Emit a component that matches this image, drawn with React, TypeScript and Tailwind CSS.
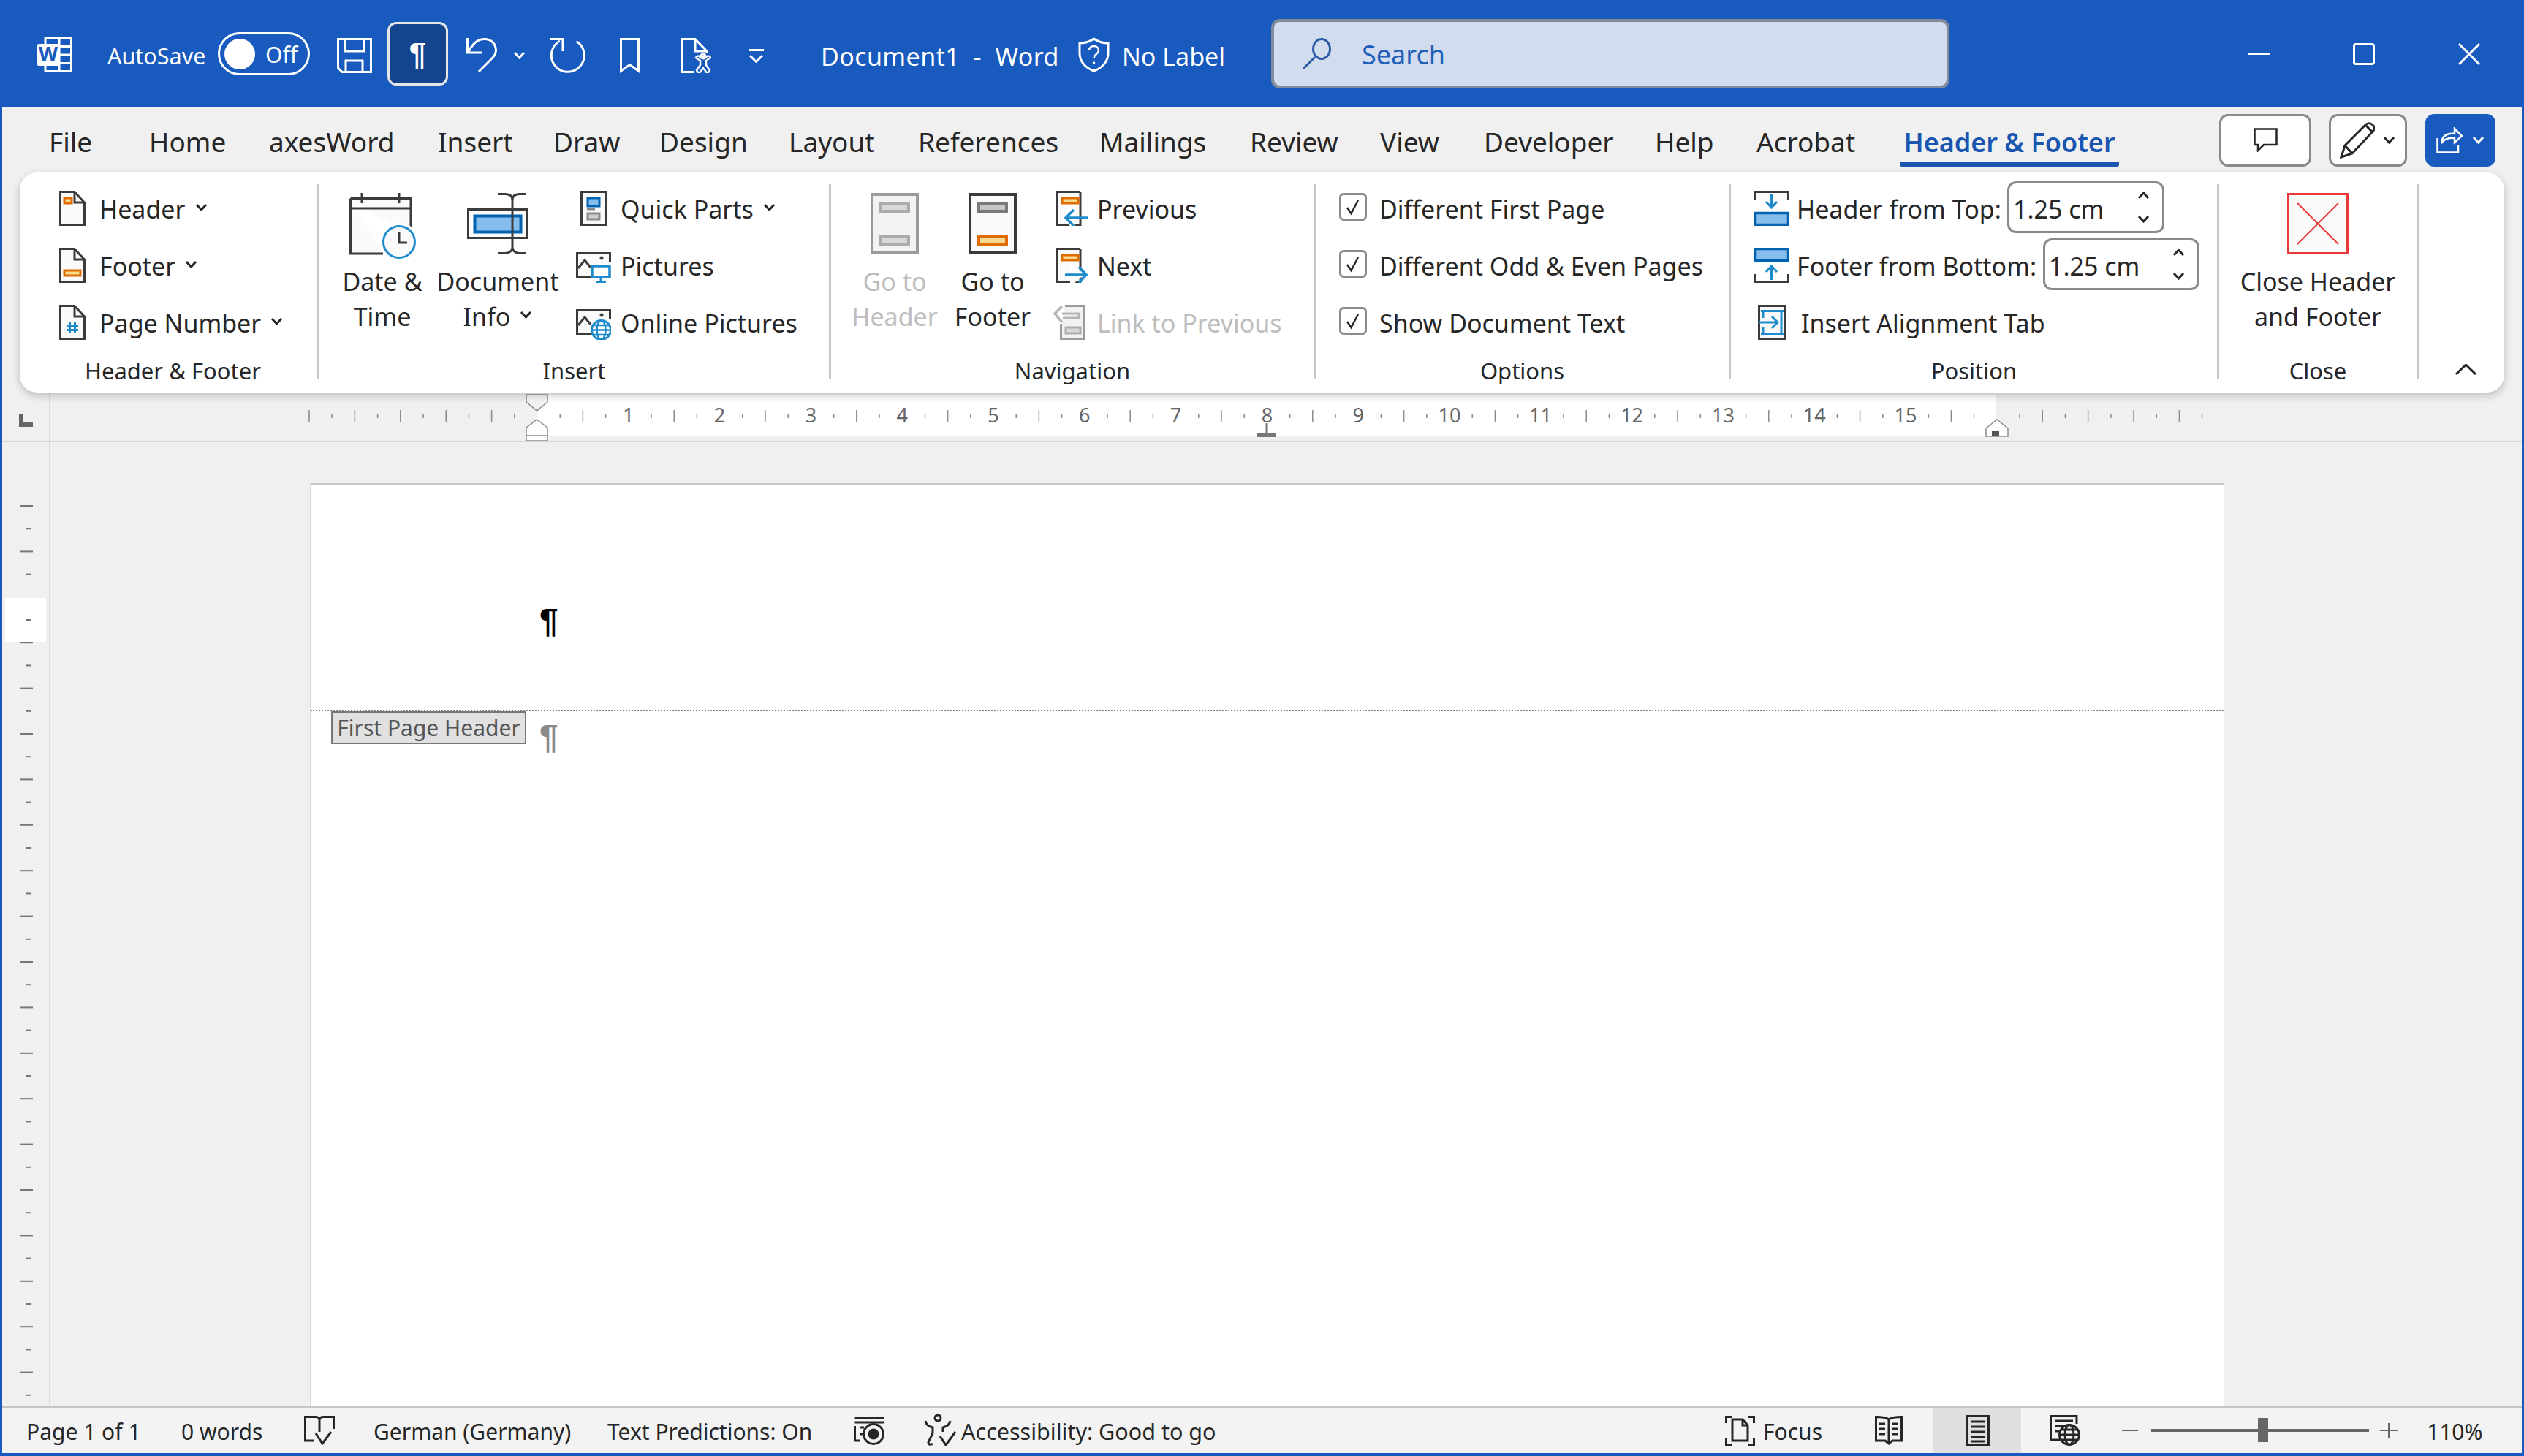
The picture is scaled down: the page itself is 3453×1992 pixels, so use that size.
import type { ReactNode } from "react"

const DARK = "#3b3b3b"
const BLUE = "#1e8bcd"
const ORANGE = "#e06c00"
const PALE = "#f8d98e"
const GREY = "#9b9b9b"

function Chevron({ up = false, color = "#262626", className = "" }: { up?: boolean; color?: string; className?: string }) {
  return (
    <svg className={`w-[17px] h-[10px] shrink-0 ${className}`} viewBox="0 0 17 10" fill="none" stroke={color} strokeWidth={3}>
      <path d={up ? "M2 9L8.5 2L15 9" : "M2 1L8.5 8L15 1"} />
    </svg>
  )
}

function PageIcon({ children }: { children?: ReactNode }) {
  return (
    <svg className="w-[36px] h-[48px]" viewBox="0 0 36 48" fill="#fafafa" stroke={DARK} strokeWidth={3}>
      <path d="M1.5 1.5H21L34.5 16V46.5H1.5Z" />
      <path d="M21 1.5V16H34.5" fill="none" />
      {children}
    </svg>
  )
}

function HeaderIcon() {
  return (
    <PageIcon>
      <rect x="7" y="10" width="10" height="7" fill={PALE} stroke={ORANGE} strokeWidth={3} />
    </PageIcon>
  )
}

function FooterIcon() {
  return (
    <PageIcon>
      <rect x="7" y="31" width="22" height="7" fill={PALE} stroke={ORANGE} strokeWidth={3} />
    </PageIcon>
  )
}

function NumberIcon() {
  return (
    <PageIcon>
      <path d="M14.5 24V39M21.5 24V39M10 28.5H26M10 34.5H26" fill="none" stroke={BLUE} strokeWidth={3} />
    </PageIcon>
  )
}

function DateIcon() {
  return (
    <svg className="w-[91px] h-[90px]" viewBox="0 0 91 90" fill="#fafafa" stroke={DARK} strokeWidth={3}>
      <path d="M1.5 7.5H84V60M46 83H1.5V7.5" />
      <path d="M1.5 21H84M17 0V14M68 0V14" fill="none" />
      <circle cx="68" cy="67" r="25" fill="#fff" stroke="#fff" />
      <circle cx="68" cy="67" r="21.5" fill="#fafafa" stroke={BLUE} />
      <path d="M68 53V68H79" fill="none" />
    </svg>
  )
}

function DocInfoIcon() {
  return (
    <svg className="w-[84px] h-[84px]" viewBox="0 0 84 84" fill="none" stroke={DARK} strokeWidth={3}>
      <rect x="1.5" y="22.5" width="81" height="39" fill="#fafafa" />
      <rect x="10.5" y="31.5" width="63" height="22" fill="#85bdec" stroke="#0063b1" strokeWidth={4} />
      <path d="M42 1.5H52C58 1.5 62 4 62 10V74C62 79 58 82.5 52 82.5H42M81 1.5H72C66 1.5 62 4 62 10M62 74C62 79 66 82.5 72 82.5H81" />
    </svg>
  )
}

function QuickPartsIcon() {
  return (
    <svg className="w-[36px] h-[48px]" viewBox="0 0 36 48" fill="#fafafa" stroke={DARK} strokeWidth={3}>
      <rect x="1.5" y="1.5" width="33" height="45" />
      <rect x="10" y="10" width="16" height="11" fill="#85bdec" stroke="#0063b1" />
      <path d="M9 25H20" stroke="#8a8a8a" fill="none" />
      <rect x="10" y="31" width="16" height="8" fill="#d0d0d0" stroke="#8a8a8a" />
    </svg>
  )
}

function PicFrame({ children }: { children: ReactNode }) {
  return (
    <svg className="w-[48px] h-[48px]" viewBox="0 0 48 48" fill="none" stroke={DARK} strokeWidth={3}>
      <path d="M24 39.5H1.5V7.5H46.5V20" fill="#fafafa" />
      <path d="M3 28L12 17L20 27" />
      <circle cx="35" cy="14" r="2.5" fill={DARK} stroke="none" />
      {children}
    </svg>
  )
}

function PicturesIcon() {
  return (
    <PicFrame>
      <rect x="22" y="25" width="24" height="15" fill="#fff" stroke={BLUE} strokeWidth={3.5} />
      <path d="M34 40V46M27 46.5H41" stroke={BLUE} strokeWidth={3} />
    </PicFrame>
  )
}

function OnlinePicturesIcon() {
  return (
    <PicFrame>
      <circle cx="34.5" cy="34.5" r="13" fill="#fff" stroke={BLUE} strokeWidth={3} />
      <ellipse cx="34.5" cy="34.5" rx="6" ry="13" stroke={BLUE} strokeWidth={2.5} />
      <path d="M21 34.5H48M23 28H46M23 41H46" stroke={BLUE} strokeWidth={2.5} />
    </PicFrame>
  )
}

function GoToIcon({ footer = false }: { footer?: boolean }) {
  const edge = footer ? DARK : GREY
  return (
    <svg className="w-[66px] h-[84px]" viewBox="0 0 66 84" strokeWidth={4}>
      <rect x="2" y="2" width="62" height="80" fill={footer ? "#fafafa" : "#f2f2f2"} stroke={edge} />
      <rect x="14" y="14" width="38" height="11" fill={footer ? "#c8c6c4" : "#d8d8d8"} stroke={footer ? "#7a7a7a" : "#acacac"} />
      <rect
        x="14"
        y="59"
        width="38"
        height="11"
        fill={footer ? PALE : "#d8d8d8"}
        stroke={footer ? ORANGE : "#acacac"}
      />
    </svg>
  )
}

function PrevNextIcon({ next = false }: { next?: boolean }) {
  return (
    <svg className="w-[48px] h-[48px]" viewBox="0 0 48 48" fill="none">
      <path d="M38 1.5H6.5V46.5H38V1.5" fill="#fafafa" stroke={DARK} strokeWidth={3} />
      <rect x="13" y="10" width="22" height="7" fill={PALE} stroke={ORANGE} strokeWidth={3} />
      {next ? (
        <g>
          <path d="M24 21L44 36L30 48H24Z" fill="#fff" />
          <path d="M17 37H46M36 26L46 37L36 48" stroke={BLUE} strokeWidth={3.5} />
        </g>
      ) : (
        <g>
          <path d="M24 21L11 36L24 48H30V21Z" fill="#fff" />
          <path d="M48 37H19M29 26L18 37L29 48" stroke={BLUE} strokeWidth={3.5} />
        </g>
      )}
    </svg>
  )
}

function LinkIcon() {
  return (
    <svg className="w-[48px] h-[48px]" viewBox="0 0 48 48" fill="none" stroke={GREY} strokeWidth={3}>
      <path d="M17 1.5H43.5V46.5H11.5V26" fill="#f2f2f2" />
      <path d="M3 12H36V18H14" strokeWidth={3} stroke="#b5b5b5" />
      <path d="M13 2L3 12L13 24" strokeWidth={3.5} stroke="#b5b5b5" fill="#fff" />
      <rect x="18" y="31" width="20" height="8" fill="#d8d8d8" stroke="#acacac" />
    </svg>
  )
}

function CheckBox() {
  return (
    <span className="w-[38px] h-[38px] mb-[5px] shrink-0 flex items-center justify-center rounded-[6px] border-[3px] border-[#8a8a8a] bg-white">
      <svg className="w-[22px] h-[24px]" viewBox="0 0 22 24" fill="none" stroke="#262626" strokeWidth={2.5}>
        <path d="M3 13L8.5 21L18 3" />
      </svg>
    </span>
  )
}

function FromTopIcon() {
  return (
    <svg className="w-[48px] h-[48px]" viewBox="0 0 48 48" fill="none" strokeWidth={3}>
      <path d="M1.5 12V1.5H46.5V12" stroke={DARK} fill="#fafafa" />
      <path d="M23.5 5V22M16 15L23.5 23L31 15" stroke={BLUE} />
      <rect x="1.5" y="30.5" width="45" height="16" fill="#85bdec" stroke="#0063b1" strokeWidth={3.5} />
    </svg>
  )
}

function FromBottomIcon() {
  return (
    <svg className="w-[48px] h-[48px]" viewBox="0 0 48 48" fill="none" strokeWidth={3}>
      <path d="M1.5 36V46.5H46.5V36" stroke={DARK} />
      <path d="M23.5 44V25M16 33L23.5 25L31 33" stroke={BLUE} />
      <rect x="1.5" y="1.5" width="45" height="16" fill="#85bdec" stroke="#0063b1" strokeWidth={3.5} />
    </svg>
  )
}

function AlignTabIcon() {
  return (
    <svg className="w-[48px] h-[48px]" viewBox="0 0 48 48" fill="none" strokeWidth={3}>
      <rect x="6.5" y="1.5" width="36" height="45" stroke={DARK} fill="#fafafa" />
      <path d="M9 8.5H40M9 40.5H40M12 8V18M12 30V40M37 8V40" stroke={BLUE} />
      <path d="M7 24H31M24 16L32 24L24 32" stroke={BLUE} />
    </svg>
  )
}

function CloseIcon() {
  return (
    <svg className="w-[84px] h-[84px]" viewBox="0 0 84 84" fill="#fafafa">
      <rect x="1.5" y="1.5" width="81" height="81" stroke="#e83a3a" strokeWidth={3} />
      <path d="M14 14L70 70M70 14L14 70" stroke="#e83a3a" strokeWidth={2} fill="none" />
    </svg>
  )
}

function SmallBtn({ icon, label, chevron, muted }: { icon: ReactNode; label: string; chevron?: boolean; muted?: boolean }) {
  return (
    <div className={`flex items-center h-[48px] whitespace-nowrap ${muted ? "text-[#bdbdbd]" : ""}`}>
      <span className="w-[48px] h-[48px] flex items-center justify-center shrink-0">{icon}</span>
      <span className="ml-[13px] pt-[3px]">{label}</span>
      {chevron && <Chevron className="ml-[13px] mb-[2px]" />}
    </div>
  )
}

function LargeBtn({ icon, lines, chevron, muted, className }: { icon: ReactNode; lines: string[]; chevron?: boolean; muted?: boolean; className: string }) {
  return (
    <div className={`flex flex-col items-center pt-[12px] whitespace-nowrap ${muted ? "text-[#bdbdbd]" : ""} ${className}`}>
      <span className="h-[84px] flex items-start justify-center">{icon}</span>
      <span className="mt-[13px] leading-[48px]">{lines[0]}</span>
      <span className="leading-[48px] flex items-center">
        {lines[1]}
        {chevron && <Chevron className="ml-[13px] mb-[4px]" />}
      </span>
    </div>
  )
}

function Group({ label, className, labelClass = "", children }: { label: string; className: string; labelClass?: string; children: ReactNode }) {
  return (
    <div className={`h-[266px] flex flex-col border-r-[3px] border-[#c8c8c8] shrink-0 ${className}`}>
      <div className="flex-1 flex items-start">{children}</div>
      <div className={`h-[22px] leading-[22px] text-center text-[31px] ${labelClass}`}>{label}</div>
    </div>
  )
}

function Spinner({ className }: { className: string }) {
  return (
    <div className={`h-[71px] flex items-center justify-between rounded-[12px] border-[3px] border-[#8a8a8a] bg-white pl-[5px] pr-[17px] mb-[4px] ${className}`}>
      <span className="pt-[6px]">1.25 cm</span>
      <span className="flex flex-col gap-[23px]">
        <Chevron up />
        <Chevron />
      </span>
    </div>
  )
}

function TitleBar() {
  return (
    <div className="h-[147px] shrink-0 flex items-center pl-[51px] text-white text-[34px] whitespace-nowrap">
      <svg className="w-[48px] h-[48px] mt-[3px]" viewBox="0 0 48 48" fill="none" stroke="#fff" strokeWidth={3}>
        <path d="M11 10V1.5H46.5V46.5H11V38M30 1.5V46.5M30 12.5H46.5M30 24H46.5M30 35.5H46.5" />
        <rect x="0" y="9" width="30" height="30" rx="2" fill="#fff" stroke="none" />
        <text x="15" y="32" textAnchor="middle" fontSize="27" fontWeight="700" fill="#185abd" stroke="none">W</text>
      </svg>
      <span className="ml-[48px] w-[133px] mt-[7px] text-[30.5px]">AutoSave</span>
      <div className="ml-[18px] w-[126px] h-[59px] rounded-full border-[3px] border-white flex items-center pl-[6px]">
        <span className="w-[42px] h-[42px] rounded-full bg-white" />
        <span className="ml-[14px] text-[30px] pt-[2px]">Off</span>
      </div>
      <svg className="ml-[37px] w-[48px] h-[48px] mt-[5px]" viewBox="0 0 48 48" fill="none" stroke="#fff" strokeWidth={3}>
        <path d="M1.5 1.5H46.5V46.5H7L1.5 41Z" />
        <path d="M10.5 1.5V18H37V1.5M12 46.5V31H35V46.5" />
      </svg>
      <div className="ml-[21px] w-[83px] h-[87px] rounded-[12px] border-[3px] border-[#e6e6e6] bg-[#15448f] flex items-center justify-center font-['Liberation_Sans',sans-serif] font-bold text-[42px]">¶</div>
      <svg className="ml-[25px] w-[42px] h-[48px] mt-[5px]" viewBox="0 0 42 48" fill="none" stroke="#fff" strokeWidth={3}>
        <path d="M1.5 0V20H21" />
        <path d="M2 20C6 14 11 1.5 25 1.5C34 1.5 40.5 8 40.5 17C40.5 22 38 25 35 28L17 46" />
      </svg>
      <Chevron color="#fff" className="ml-[22px] mt-[5px]" />
      <svg className="ml-[33px] w-[48px] h-[48px] mt-[5px]" viewBox="0 0 48 48" fill="none" stroke="#fff" strokeWidth={3}>
        <path d="M36.5 4.5A22.5 22.5 0 1 1 14 4" />
        <path d="M0 1.5H18V18" />
      </svg>
      <svg className="ml-[48px] w-[27px] h-[48px] mt-[5px]" viewBox="0 0 27 48" fill="none" stroke="#fff" strokeWidth={3}>
        <path d="M1.5 1.5H25.5V45L13.5 36.5L1.5 45Z" />
      </svg>
      <svg className="ml-[57px] w-[41px] h-[48px] mt-[5px]" viewBox="0 0 41 48" fill="none" stroke="#fff" strokeWidth={3}>
        <path d="M17 46.5H1.5V1.5H19L35 18V20" />
        <path d="M19 1.5V18H35" />
        <circle cx="30" cy="25" r="3" />
        <path d="M20 27L26 31L26 37L21 44C22 48 26 48 27 45L30 41L33 45C34 48 38 48 39 44L34 37L34 31L40 27C39 24 36 24 34 26H26C24 24 21 24 20 27Z" strokeWidth={2.5} />
      </svg>
      <svg className="ml-[51px] w-[21px] h-[19px] mt-[5px]" viewBox="0 0 21 19" fill="none" stroke="#fff" strokeWidth={3}>
        <path d="M0 1.5H21M2 9L10.5 17.5L19 9" />
      </svg>
      <span className="ml-[78px] w-[325px] mt-[7px] whitespace-pre tracking-[0.012em]">{"Document1  -  Word"}</span>
      <svg className="ml-[27px] w-[43px] h-[48px] mt-[3px]" viewBox="0 0 43 48" fill="none" stroke="#fff" strokeWidth={3}>
        <path d="M21.5 2C27 6 33 8 41 8V22C41 33 33 42 21.5 46C10 42 2 33 2 22V8C10 8 16 6 21.5 2Z" />
        <path d="M15 18C15 10 28 10 28 18C28 23 21.5 23 21.5 29" strokeWidth={2.5} />
        <circle cx="21.5" cy="35" r="1.8" fill="#fff" stroke="none" />
      </svg>
      <span className="ml-[17px] w-[139px] mt-[7px]">No Label</span>
      <div className="ml-[65px] w-[928px] h-[95px] rounded-[12px] border-[4px] border-[#828b9b] bg-[#d1dcee] flex items-center pl-[38px] text-[#1f5fb8] text-[36px]">
        <svg className="w-[40px] h-[43px] shrink-0" viewBox="0 0 40 43" fill="none" stroke="#2d5ca6" strokeWidth={3}>
          <ellipse cx="27" cy="15" rx="11.5" ry="13.5" />
          <path d="M18 26L2 42" />
        </svg>
        <span className="ml-[42px] pt-[2px]">Search</span>
      </div>
      <span className="ml-[408px] w-[30px] h-[3px] bg-white" />
      <span className="ml-[114px] w-[30px] h-[30px] rounded-[4px] border-[3px] border-white" />
      <svg className="ml-[114px] w-[30px] h-[30px]" viewBox="0 0 30 30" fill="none" stroke="#fff" strokeWidth={3}>
        <path d="M1 1L29 29M29 1L1 29" />
      </svg>
    </div>
  )
}

const tabs = [
  ["File", "w-[137px]"],
  ["Home", "w-[164px]"],
  ["axesWord", "w-[231px]"],
  ["Insert", "w-[158px]"],
  ["Draw", "w-[145px]"],
  ["Design", "w-[177px]"],
  ["Layout", "w-[177px]"],
  ["References", "w-[248px]"],
  ["Mailings", "w-[206px]"],
  ["Review", "w-[178px]"],
  ["View", "w-[142px]"],
  ["Developer", "w-[234px]"],
  ["Help", "w-[139px]"],
  ["Acrobat", "w-[196px]"],
]

function TabRow() {
  return (
    <div className="h-[89px] shrink-0 flex items-center pl-[64px] text-[37px] text-[#262626] whitespace-nowrap">
      {tabs.map(([name, width]) => (
        <span key={name} className={`${width} pt-[5px]`}>
          {name}
        </span>
      ))}
      <span className="w-[300px] h-[81px] self-start flex items-center justify-center pt-[20px] border-b-[6px] border-[#1a56b0] rounded-b-[3px] text-[#1a56b0] font-semibold text-[36px]">
        Header &amp; Footer
      </span>
      <div className="ml-[137px] w-[126px] h-[72px] rounded-[12px] border-[3px] border-[#8a8a8a] bg-white flex items-center justify-center">
        <svg className="w-[33px] h-[33px]" viewBox="0 0 33 33" fill="none" stroke="#262626" strokeWidth={2.5}>
          <path d="M1.5 1.5H31.5V23H14L6 31V23H1.5Z" />
        </svg>
      </div>
      <div className="ml-[24px] w-[107px] h-[72px] rounded-[12px] border-[3px] border-[#8a8a8a] bg-white flex items-center pl-[12px]">
        <svg className="w-[48px] h-[50px] shrink-0" viewBox="0 0 48 50" fill="none" stroke="#262626" strokeWidth={3}>
          <path d="M2 48L7 32L35 4C38 1 42 1 45 4C48 7 48 10 45 13L17 43Z" />
          <path d="M7 32L17 43M35 4L45 14" />
        </svg>
        <Chevron className="ml-[11px]" />
      </div>
      <div className="ml-[25px] w-[96px] h-[72px] rounded-[12px] bg-[#185abd] flex items-center pl-[15px]">
        <svg className="w-[36px] h-[36px] shrink-0" viewBox="0 0 36 36" fill="none" stroke="#fff" strokeWidth={2.5}>
          <path d="M1.5 15V34.5H30V24M7 22C8 12 14 8 25 9V2L35 12L25 21V15C17 14 11 16 7 22Z" />
        </svg>
        <Chevron color="#fff" className="ml-[13px]" />
      </div>
    </div>
  )
}

function Ribbon() {
  return (
    <div className="relative z-10 shrink-0 ml-[24px] w-[3399px] h-[301px] bg-white rounded-[24px] shadow-[0_4px_12px_rgba(0,0,0,0.22)] pt-[16px] flex text-[34px] text-[#262626]">
      <Group label="Header & Footer" className="w-[410px]" labelClass="pl-[12px]">
        <div className="pl-[48px] pt-[9px] flex flex-col gap-[30px]">
          <SmallBtn icon={<HeaderIcon />} label="Header" chevron />
          <SmallBtn icon={<FooterIcon />} label="Footer" chevron />
          <SmallBtn icon={<NumberIcon />} label="Page Number" chevron />
        </div>
      </Group>

      <Group label="Insert" className="w-[700px]">
        <LargeBtn className="ml-[7px] w-[158px]" icon={<DateIcon />} lines={["Date &", "Time"]} />
        <LargeBtn className="w-[158px]" icon={<DocInfoIcon />} lines={["Document", "Info"]} chevron />
        <div className="ml-[28px] pt-[9px] flex flex-col gap-[30px]">
          <SmallBtn icon={<QuickPartsIcon />} label="Quick Parts" chevron />
          <SmallBtn icon={<PicturesIcon />} label="Pictures" />
          <SmallBtn icon={<OnlinePicturesIcon />} label="Online Pictures" />
        </div>
      </Group>

      <Group label="Navigation" className="w-[663px]">
        <LargeBtn className="ml-[20px] w-[134px]" icon={<GoToIcon />} lines={["Go to", "Header"]} muted />
        <LargeBtn className="w-[134px]" icon={<GoToIcon footer />} lines={["Go to", "Footer"]} />
        <div className="ml-[15px] pt-[9px] flex flex-col gap-[30px]">
          <SmallBtn icon={<PrevNextIcon />} label="Previous" />
          <SmallBtn icon={<PrevNextIcon next />} label="Next" />
          <SmallBtn icon={<LinkIcon />} label="Link to Previous" muted />
        </div>
      </Group>

      <Group label="Options" className="w-[568px]">
        <div className="pl-[32px] pt-[9px] flex flex-col gap-[30px] whitespace-nowrap">
          {["Different First Page", "Different Odd & Even Pages", "Show Document Text"].map((t) => (
            <div key={t} className="flex items-center h-[48px] gap-[17px]">
              <CheckBox />
              <span className="pt-[3px]">{t}</span>
            </div>
          ))}
        </div>
      </Group>

      <Group label="Position" className="w-[668px]">
        <div className="pl-[32px] pt-[9px] flex flex-col gap-[30px] whitespace-nowrap">
          <div className="flex items-center h-[48px]">
            <FromTopIcon />
            <span className="ml-[10px] w-[288px] pt-[3px]">Header from Top:</span>
            <Spinner className="w-[215px]" />
          </div>
          <div className="flex items-center h-[48px]">
            <FromBottomIcon />
            <span className="ml-[10px] w-[337px] pt-[3px]">Footer from Bottom:</span>
            <Spinner className="w-[214px]" />
          </div>
          <div className="flex items-center h-[48px]">
            <AlignTabIcon />
            <span className="ml-[16px] pt-[3px]">Insert Alignment Tab</span>
          </div>
        </div>
      </Group>

      <Group label="Close" className="w-[273px]">
        <LargeBtn className="w-[270px]" icon={<CloseIcon />} lines={["Close Header", "and Footer"]} />
      </Group>

      <div className="h-[266px] flex-1 flex items-end pb-[5px] pl-[50px]">
        <svg className="w-[29px] h-[15px]" viewBox="0 0 29 15" fill="none" stroke="#262626" strokeWidth={3}>
          <path d="M1 14L14.5 1L28 14" />
        </svg>
      </div>
    </div>
  )
}

// every quarter cm, 124.8px per cm, zero at x=732 in the ruler's own coords
function HorizontalRuler() {
  const marks: ReactNode[] = []
  for (let i = -10; i <= 73; i++) {
    const x = 732 + i * 31.2
    if (i === 0) continue
    if (i % 4 === 0 && i > 0 && i < 64) {
      marks.push(
        <text key={i} x={x} y={41} textAnchor="middle" fontSize="27" fill="#666666" stroke="none">
          {i / 4}
        </text>,
      )
    } else if (i === 64) {
      continue
    } else if (i % 2 === 0) {
      marks.push(<path key={i} d={`M${x} 24V41`} />)
    } else {
      marks.push(<path key={i} d={`M${x} 30V35`} />)
    }
  }
  return (
    <div className="relative h-[68px] shrink-0 border-b-2 border-[#d6d6d6] flex">
      <div className="w-[66px] border-r-2 border-[#dcdcdc] flex items-center pl-[23px] pt-[9px]">
        <span className="w-[19px] h-[18px] border-l-[6px] border-b-[6px] border-[#666666]" />
      </div>
      <div className="ml-[666px] mt-[3px] w-[1996px] h-[56px] bg-white" />
      <svg className="absolute inset-0 w-[3447px] h-[68px]" viewBox="0 0 3447 68" fill="none" stroke="#8a8a8a" strokeWidth={1.5}>
        {marks}
        <path d="M717 3H746V13L731.5 25L717 13Z" fill="#f4f4f4" />
        <path d="M717 59V48L731.5 37L746 48V59H717V66H746V59" fill="#fff" />
        <path d="M1730 42V56" stroke="#777777" strokeWidth={3} />
        <path d="M1717 58H1742" stroke="#777777" strokeWidth={6} />
        <path d="M2714 60V49L2729 37L2744 49V60Z" fill="#fff" />
        <path d="M2722 60V52H2732V60Z" fill="#555555" stroke="none" />
      </svg>
    </div>
  )
}

function VerticalRuler() {
  const marks: ReactNode[] = []
  for (let i = 0; i < 40; i++) {
    if (i === 4) continue
    const y = 87 + i * 31.2
    marks.push(<path key={i} d={i % 2 === 0 ? `M25 ${y}H42` : `M33 ${y}H39`} />)
  }
  return (
    <div className="relative w-[66px] shrink-0 border-r-2 border-[#dcdcdc]">
      <div className="ml-[4px] mt-[213px] w-[56px] h-[61px] bg-white" />
      <svg className="absolute inset-0 w-[66px] h-[1318px]" viewBox="0 0 66 1318" fill="none" stroke="#777777" strokeWidth={2}>
        {marks}
      </svg>
    </div>
  )
}

function DocArea() {
  return (
    <div className="h-[1318px] shrink-0 flex overflow-hidden">
      <VerticalRuler />
      <div className="ml-[355px] mt-[56px] w-[2619px] flex-none bg-white border-t-2 border-x border-t-[#c6c6c6] border-x-[#d8d8d8]">
        <div className="h-[310px] border-b-2 border-dotted border-[#808080] pl-[313px] pt-[161px] font-['Liberation_Sans',sans-serif] font-bold text-[46px] leading-[50px] text-black">¶</div>
        <div className="flex items-start pl-[28px]">
          <div className="w-[267px] h-[45px] bg-[#e1e1e1] border-2 border-[#777777] flex items-center justify-center text-[30px] text-[#555555] whitespace-nowrap">
            First Page Header
          </div>
          <span className="ml-[18px] mt-[10px] font-['Liberation_Sans',sans-serif] font-bold text-[46px] leading-[50px] text-[#8a8a8a]">¶</span>
        </div>
      </div>
    </div>
  )
}

function StatusBar() {
  return (
    <div className="h-[65px] flex-1 border-t-[3px] border-[#c6c6c6] bg-[#f3f3f3] flex items-center pl-[33px] text-[30px] text-[#262626] whitespace-nowrap">
      <span className="w-[212px] pt-[3px]">Page 1 of 1</span>
      <span className="w-[168px] pt-[3px]">0 words</span>
      <span className="w-[95px]">
        <svg className="w-[42px] h-[40px]" viewBox="0 0 42 40" fill="none" stroke="#262626" strokeWidth={3}>
          <path d="M14 34H1.5V1.5H16C19 1.5 21 3 21 6V22M21 6C21 3 23 1.5 26 1.5H40.5V18" />
          <path d="M16 24L25 38L37 22" strokeWidth={3} />
        </svg>
      </span>
      <span className="w-[320px] pt-[3px]">German (Germany)</span>
      <span className="w-[337px] pt-[3px]">Text Predictions: On</span>
      <span className="w-[96px]">
        <svg className="w-[43px] h-[40px]" viewBox="0 0 43 40" fill="none" stroke="#262626" strokeWidth={3}>
          <path d="M1.5 3H41.5M1.5 9H41.5M1.5 14V34M8 16H14M8 25H12M1.5 34H8" />
          <circle cx="27" cy="25" r="13.5" />
          <circle cx="27" cy="25" r="6" fill="#262626" />
        </svg>
      </span>
      <span className="w-[51px]">
        <svg className="w-[44px] h-[44px]" viewBox="0 0 44 44" fill="none" stroke="#262626" strokeWidth={3}>
          <circle cx="19" cy="5" r="4" />
          <path d="M2 9C3 15 8 17 12 18V26L6 38C6 42 10 42 12 40M36 9C35 15 30 17 26 18V24M22 30L30 42L43 24" />
        </svg>
      </span>
      <span className="w-[1045px] pt-[3px] text-[30.5px]">Accessibility: Good to go</span>
      <svg className="w-[41px] h-[41px]" viewBox="0 0 41 41" fill="none" stroke="#262626" strokeWidth={3}>
        <path d="M1.5 10V1.5H9M32 1.5H39.5V10M1.5 31V39.5H9M32 39.5H39.5V31" />
        <path d="M10 5H24L31 13V34H10Z" />
        <path d="M24 5V13H31" />
      </svg>
      <span className="ml-[11px] w-[153px] pt-[3px]">Focus</span>
      <svg className="w-[38px] h-[40px]" viewBox="0 0 38 40" fill="none" stroke="#262626" strokeWidth={3}>
        <path d="M19 5C15 1.5 6 1.5 1.5 1.5V34H14L19 38L24 34H36.5V1.5C32 1.5 23 1.5 19 5V36" />
        <path d="M6 11H14M6 18H14M6 25H14M24 11H32M24 18H32M24 25H32" />
      </svg>
      <div className="ml-[42px] w-[120px] h-[62px] bg-[#dfdfdf] flex items-center justify-center">
        <svg className="w-[33px] h-[42px]" viewBox="0 0 33 42" fill="none" stroke="#262626" strokeWidth={3}>
          <rect x="1.5" y="1.5" width="30" height="39" />
          <path d="M7 9H26M7 16H26M7 23H26M7 30H26M7 36H26" />
        </svg>
      </div>
      <svg className="ml-[39px] w-[42px] h-[42px]" viewBox="0 0 42 42" fill="none" stroke="#262626" strokeWidth={3}>
        <path d="M14 34H1.5V1.5H37V12M8 8H32M8 15H22M8 22H13" />
        <circle cx="27" cy="27" r="13.5" fill="#f3f3f3" />
        <ellipse cx="27" cy="27" rx="6" ry="13.5" />
        <path d="M13.5 27H40.5M15 20H39M15 34H39" />
      </svg>
      <span className="ml-[57px] w-[22px] h-[2px] bg-[#666666]" />
      <div className="relative ml-[18px] w-[298px] h-[4px] bg-[#666666]">
        <span className="absolute left-[146px] -top-[15px] w-[14px] h-[33px] bg-[#666666]" />
      </div>
      <span className="ml-[15px] w-[24px] h-[20px] relative">
        <span className="absolute left-0 top-[9px] w-[24px] h-[2px] bg-[#666666]" />
        <span className="absolute left-[11px] top-0 w-[2px] h-[20px] bg-[#666666]" />
      </span>
      <span className="ml-[40px] pt-[3px]">110%</span>
    </div>
  )
}

export default function App() {
  return (
    <div className="w-[3453px] h-[1992px] bg-[#185abd] flex flex-col overflow-hidden font-['Noto_Sans','Open_Sans',sans-serif]">
      <TitleBar />
      <div className="mx-[3px] mb-[4px] flex-1 min-h-0 bg-[#f0f0f0] flex flex-col">
        <TabRow />
        <Ribbon />
        <HorizontalRuler />
        <DocArea />
        <StatusBar />
      </div>
    </div>
  )
}
